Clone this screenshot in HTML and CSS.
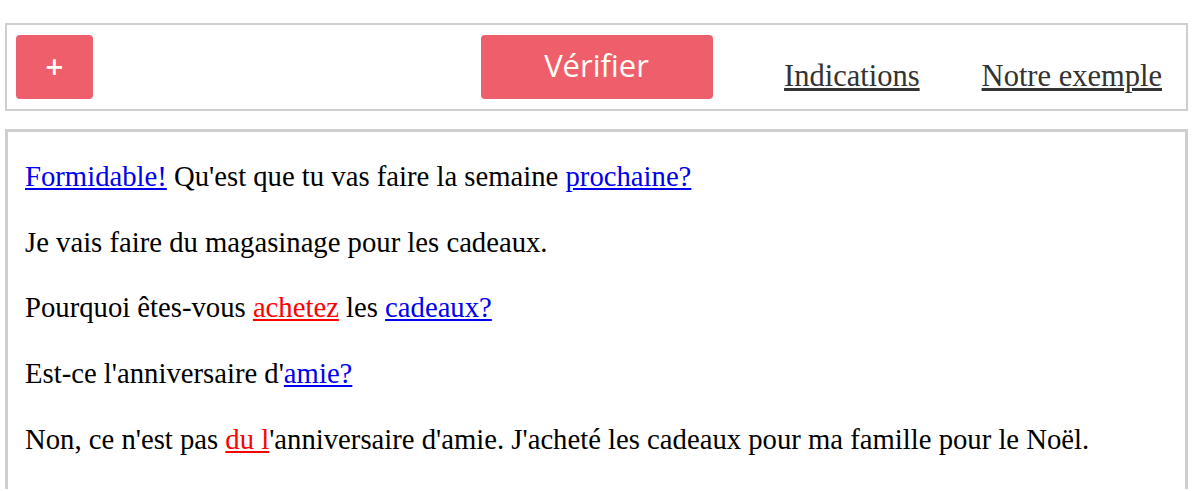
FILE: index.html
```html
<!DOCTYPE html>
<html lang="fr">
<head>
<meta charset="utf-8">
<title>Exercice</title>
<link rel="stylesheet" href="styles.css">
</head>
<body>
<div class="toolbar">
  <div class="tb-left">
    <button class="btn btn-add" type="button">+</button>
  </div>
  <div class="tb-center">
    <button class="btn btn-check" type="button">Vérifier</button>
  </div>
  <div class="tb-right">
    <a class="tb-link" href="#">Indications</a>
    <a class="tb-link" href="#">Notre exemple</a>
  </div>
</div>
<div class="dialogue">
  <p><a class="ok" href="#">Formidable!</a> Qu'est que tu vas faire la semaine <a class="ok" href="#">prochaine?</a></p>
  <p>Je vais faire du magasinage pour les cadeaux.</p>
  <p>Pourquoi êtes-vous <a class="err" href="#">achetez</a> les <a class="ok" href="#">cadeaux?</a></p>
  <p>Est-ce l'anniversaire d'<a class="ok" href="#">amie?</a></p>
  <p>Non, ce n'est pas <a class="err" href="#">du l</a>'anniversaire d'amie. J'acheté les cadeaux pour ma famille pour le Noël.</p>
</div>
</body>
</html>
```
FILE: styles.css
```css
html, body {
  margin: 0;
  padding: 0;
  background: #fff;
}
body {
  padding: 23px 12px 0 5px;
  font-family: "Liberation Serif", "Times New Roman", serif;
  color: #000;
  overflow: hidden;
}
.toolbar {
  display: grid;
  grid-template-columns: 1fr auto 1fr;
  align-items: center;
  border: 2px solid #cfcfcf;
  padding: 10px 9px;
  height: 64px;
}
.tb-left {
  display: flex;
}
.tb-center {
  display: flex;
  justify-content: center;
}
.tb-right {
  display: flex;
  justify-content: flex-end;
  gap: 62px;
  padding: 18px 15px 0 0;
}
.btn {
  border: none;
  border-radius: 4px;
  background: #ee5f6b;
  color: #fffdf6;
  font-family: "Open Sans", "Noto Sans", sans-serif;
  height: 64px;
  padding: 0;
  cursor: pointer;
}
.btn-add {
  width: 77px;
  font-size: 32px;
  font-weight: 600;
  padding-bottom: 2px;
}
.btn-check {
  width: 232px;
  font-size: 31px;
  padding-bottom: 4px;
}
.tb-link {
  color: #333;
  font-size: 30.5px;
  text-decoration: underline;
}
.dialogue {
  margin-top: 18px;
  border: 3px solid #cfcfcf;
  border-bottom: none;
  padding: 0 17px;
  height: 357px;
  overflow: hidden;
}
.dialogue p {
  font-size: 28.7px;
  line-height: 33px;
  margin: 0 0 32.7px 0;
}
.dialogue p:first-child {
  margin-top: 28px;
}
.ok {
  color: #0000ee;
}
.err {
  color: #ff0000;
}
```
